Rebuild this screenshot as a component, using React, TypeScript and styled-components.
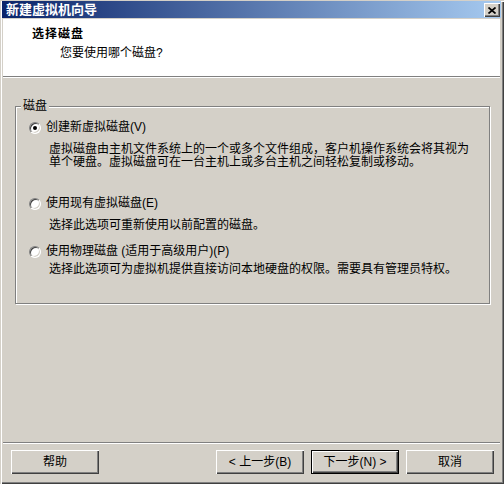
import React from "react";
import styled, { createGlobalStyle } from "styled-components";

const FACE = "#D4D0C8";
const FONT = `"Liberation Sans", "Noto Sans CJK SC", sans-serif`;

const GlobalStyle = createGlobalStyle`
  html, body { margin: 0; padding: 0; background: ${FACE}; }
  body { font-family: ${FONT}; font-size: 12px; color: #000; }
  * { box-sizing: border-box; }
`;

const Window = styled.div`
  width: 504px;
  height: 484px;
  display: flex;
  flex-direction: column;
  padding: 1px 3px 2px 2px;
  background: ${FACE};
  box-shadow: inset 1px 1px ${FACE}, inset 2px 2px #fff, inset -1px -1px #404040,
    inset -2px -2px #808080;
  overflow: hidden;
`;

const TitleBar = styled.div`
  height: 17px;
  flex: none;
  display: flex;
  align-items: center;
  justify-content: space-between;
  padding: 0 1px 0 4px;
  background: linear-gradient(to right, #0a246a, #a6caf0);
`;

const TitleText = styled.span`
  color: #fff;
  font-weight: bold;
  font-size: 13px;
  line-height: 17px;
`;

const CloseButton = styled.div`
  width: 16px;
  height: 14px;
  margin-top: 1px;
  display: flex;
  align-items: center;
  justify-content: center;
  background: ${FACE};
  box-shadow: inset 1px 1px #fff, inset -1px -1px #404040, inset -2px -2px #808080;
`;

const Header = styled.div`
  flex: none;
  height: 58px;
  margin: 1px 1px 0 1px;
  padding: 9px 0 0 29px;
  background: #fff;
  border-bottom: 1px solid #808080;
  box-shadow: 0 1px 0 #fff;
`;

const HeaderTitle = styled.div`
  font-weight: bold;
  font-size: 12px;
  letter-spacing: 1px;
  line-height: 13px;
`;

const HeaderSubtitle = styled.div`
  margin: 6px 0 0 28px;
  line-height: 13px;
`;

const Main = styled.div`
  flex: 1;
  padding-top: 29px;
`;

const GroupBox = styled.div`
  width: 475px;
  height: 198px;
  margin-left: 13px;
  border: 1px solid #808080;
  box-shadow: inset 1px 1px #fff, 1px 1px #fff;
`;

const GroupLabel = styled.div`
  width: fit-content;
  margin: -7px 0 0 5px;
  padding: 0 2px;
  background: ${FACE};
  line-height: 13px;
`;

const RadioRow = styled.div<{ $gap: number }>`
  display: flex;
  align-items: center;
  gap: 5px;
  height: 13px;
  margin: ${(p) => p.$gap}px 0 0 13px;
  line-height: 13px;
  white-space: nowrap;
`;

const RadioCircle = styled.span`
  width: 12px;
  height: 12px;
  flex: none;
  border-radius: 50%;
  border: 1px solid;
  border-color: #808080 #fff #fff #808080;
  background: #fff;
  box-shadow: inset 1px 1px #404040, inset -1px -1px ${FACE};
  display: flex;
  align-items: center;
  justify-content: center;
`;

const RadioDot = styled.span`
  width: 4px;
  height: 4px;
  border-radius: 50%;
  background: #000;
`;

const Description = styled.div<{ $gap: number }>`
  margin: ${(p) => p.$gap}px 0 0 33px;
  line-height: 13px;
  white-space: nowrap;
`;

const Footer = styled.div`
  flex: none;
`;

const Separator = styled.div`
  height: 2px;
  margin: 0 1px;
  border-top: 1px solid #808080;
  border-bottom: 1px solid #fff;
`;

const ButtonRow = styled.div`
  display: flex;
  gap: 7px;
  height: 24px;
  margin: 6px 0 8px;
  padding: 0 7px 0 9px;
`;

const Spacer = styled.div`
  flex: 1;
`;

const Button = styled.div<{ $default?: boolean }>`
  width: 88px;
  height: 24px;
  display: flex;
  align-items: center;
  justify-content: center;
  line-height: 13px;
  white-space: nowrap;
  background: ${FACE};
  border: ${(p) => (p.$default ? "1px solid #000" : "none")};
  box-shadow: inset 1px 1px #fff, inset -1px -1px #404040, inset -2px -2px #808080;
`;

type Option = { label: string; desc: string[]; checked?: boolean; gap: number; descGap: number };

const options: Option[] = [
  {
    label: "创建新虚拟磁盘(V)",
    desc: [
      "虚拟磁盘由主机文件系统上的一个或多个文件组成，客户机操作系统会将其视为",
      "单个硬盘。虚拟磁盘可在一台主机上或多台主机之间轻松复制或移动。",
    ],
    checked: true,
    gap: 8,
    descGap: 9,
  },
  {
    label: "使用现有虚拟磁盘(E)",
    desc: ["选择此选项可重新使用以前配置的磁盘。"],
    gap: 28,
    descGap: 9,
  },
  {
    label: "使用物理磁盘 (适用于高级用户)(P)",
    desc: ["选择此选项可为虚拟机提供直接访问本地硬盘的权限。需要具有管理员特权。"],
    gap: 13,
    descGap: 5,
  },
];

export default function App() {
  return (
    <>
      <GlobalStyle />
      <Window>
        <TitleBar>
          <TitleText>新建虚拟机向导</TitleText>
          <CloseButton>
            <svg width="8" height="7" viewBox="0 0 8 7">
              <path d="M0.5 0.5 L7.5 6.5 M7.5 0.5 L0.5 6.5" stroke="#000" strokeWidth="1.7" />
            </svg>
          </CloseButton>
        </TitleBar>
        <Header>
          <HeaderTitle>选择磁盘</HeaderTitle>
          <HeaderSubtitle>您要使用哪个磁盘?</HeaderSubtitle>
        </Header>
        <Main>
          <GroupBox>
            <GroupLabel>磁盘</GroupLabel>
            {options.map((o) => (
              <React.Fragment key={o.label}>
                <RadioRow $gap={o.gap}>
                  <RadioCircle>{o.checked && <RadioDot />}</RadioCircle>
                  <span>{o.label}</span>
                </RadioRow>
                <Description $gap={o.descGap}>
                  {o.desc.map((line) => (
                    <div key={line}>{line}</div>
                  ))}
                </Description>
              </React.Fragment>
            ))}
          </GroupBox>
        </Main>
        <Footer>
          <Separator />
          <ButtonRow>
            <Button>帮助</Button>
            <Spacer />
            <Button>&lt; 上一步(B)</Button>
            <Button $default>下一步(N) &gt;</Button>
            <Button>取消</Button>
          </ButtonRow>
        </Footer>
      </Window>
    </>
  );
}
